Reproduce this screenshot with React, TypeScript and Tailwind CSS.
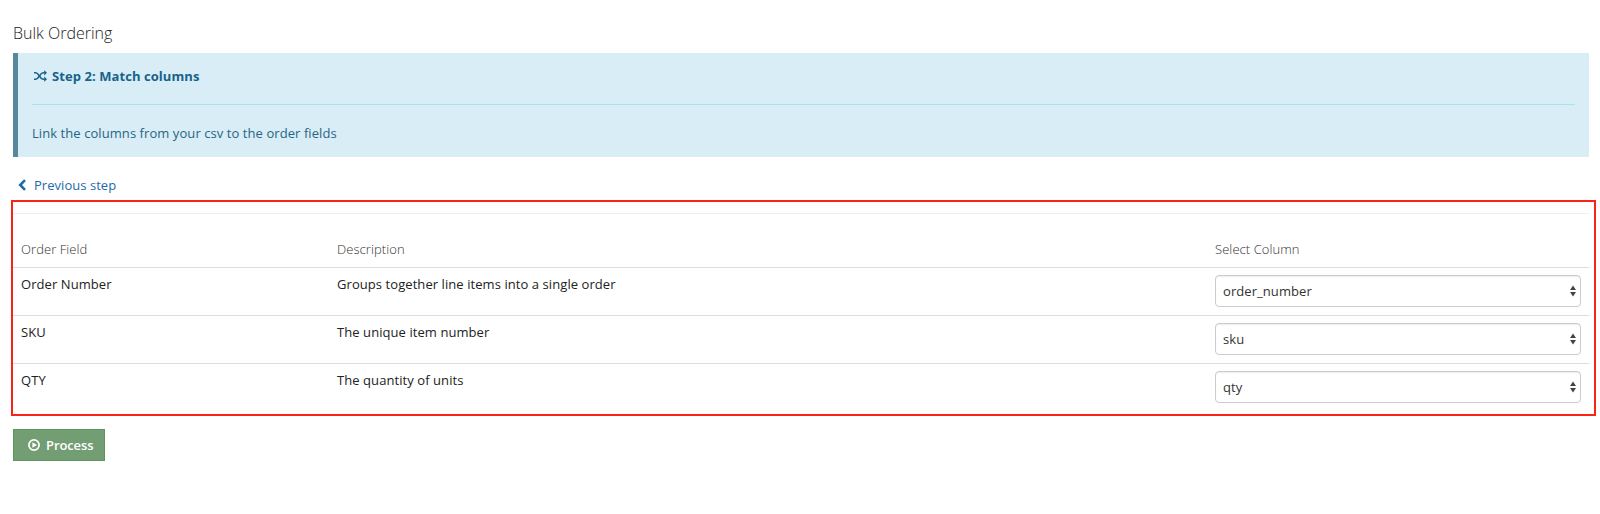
import React from 'react';

const rows = [
  { field: 'Order Number', description: 'Groups together line items into a single order', column: 'order_number' },
  { field: 'SKU', description: 'The unique item number', column: 'sku' },
  { field: 'QTY', description: 'The quantity of units', column: 'qty' },
];

function ShuffleIcon() {
  return (
    <svg className="h-3 w-[13px] shrink-0" viewBox="0 0 13 12" fill="none" stroke="currentColor" strokeWidth="1.5">
      <path d="M0 2.8h1.8C5 2.8 5.8 9.2 9 9.2h1.6" />
      <path d="M0 9.2h1.8C5 9.2 5.8 2.8 9 2.8h1.6" />
      <path d="M10.2 .2 13 2.8l-2.8 2.6zM10.2 6.6 13 9.2l-2.8 2.6z" fill="currentColor" stroke="none" />
    </svg>
  );
}

function ChevronLeftIcon() {
  return (
    <svg className="h-3 w-2 shrink-0" viewBox="0 0 8 12" fill="none" stroke="currentColor" strokeWidth="2.6">
      <path d="M7 1.2 2.2 6 7 10.8" />
    </svg>
  );
}

function PlayCircleIcon() {
  return (
    <svg className="h-3 w-3 shrink-0" viewBox="0 0 12 12" fill="none">
      <circle cx="6" cy="6" r="5.1" stroke="currentColor" strokeWidth="1.7" />
      <path d="M4.4 3.2 9 6 4.4 8.8z" fill="currentColor" />
    </svg>
  );
}

function SelectField({ value }: { value: string }) {
  return (
    <button type="button" className="flex h-8 w-full items-center justify-between rounded-[4px] border border-[#ccc] bg-white pr-1 pl-[7px] text-left tracking-[0.07px] text-[#333] shadow-[inset_0_1px_1px_rgba(0,0,0,0.075)]">
      <span>{value}</span>
      <svg className="h-3 w-[6px]" viewBox="0 0 6 12" fill="#444">
        <path d="M3 .5 6 5H0zM3 11.5 0 7h6z" />
      </svg>
    </button>
  );
}

export default function App() {
  return (
    <main className="h-[514px] bg-white pt-[23px] font-['Open_Sans',sans-serif] text-[13px] leading-5 tracking-[0.07px] text-[#222]">
      <h1 className="ml-[13px] h-[30px] text-base leading-5 font-light tracking-normal text-[#222]">Bulk Ordering</h1>

      <section className="mr-[11px] ml-[13px] h-[104px] border-l-[5px] border-[#57889c] bg-[#d9edf7] pt-[13px] pr-[14px] pl-[14px] text-[#286585]">
        <h2 className="flex h-[39px] items-start pl-[2px] leading-5 font-bold text-[#16638a]">
          <span className="flex h-5 items-center gap-[5px]">
            <ShuffleIcon />
            Step 2: Match columns
          </span>
        </h2>
        <div className="-mt-px h-px bg-[#a6e4ee]" />
        <p className="mt-[18px]">Link the columns from your csv to the order fields</p>
      </section>

      <a href="#" className="mt-[18px] ml-[18px] flex h-5 w-fit items-center gap-2 tracking-[0.04px] text-[#1e6aaa]">
        <ChevronLeftIcon />
        Previous step
      </a>

      <section className="mt-[5px] mr-1 ml-[11px] h-[216px] border-2 border-[#fb2313] pr-[5px]">
        <hr className="mt-[11px] border-[#eee]" />
        <table className="mt-[17px] w-full table-fixed border-collapse text-left">
          <colgroup>
            <col className="w-[316px]" />
            <col />
            <col className="w-[382px]" />
          </colgroup>
          <thead>
            <tr className="h-9 border-b border-[#ddd] text-[#333]">
              <th className="px-2 font-light">Order Field</th>
              <th className="px-2 font-light">Description</th>
              <th className="px-2 font-light">Select Column</th>
            </tr>
          </thead>
          <tbody>
            {rows.map((row) => (
              <tr key={row.field} className="h-12 border-b border-[#ddd] align-top last:border-b-0">
                <td className="px-2 pt-[6px]">{row.field}</td>
                <td className="px-2 pt-[6px]">{row.description}</td>
                <td className="px-2 pt-[7px]">
                  <SelectField value={row.column} />
                </td>
              </tr>
            ))}
          </tbody>
        </table>
      </section>

      <button type="button" className="mt-[13px] ml-[13px] flex h-8 w-[92px] items-center gap-[6px] border border-[#5c965c] bg-[#739e73] pl-[14px] font-semibold tracking-[-0.1px] text-white">
        <PlayCircleIcon />
        Process
      </button>
    </main>
  );
}
